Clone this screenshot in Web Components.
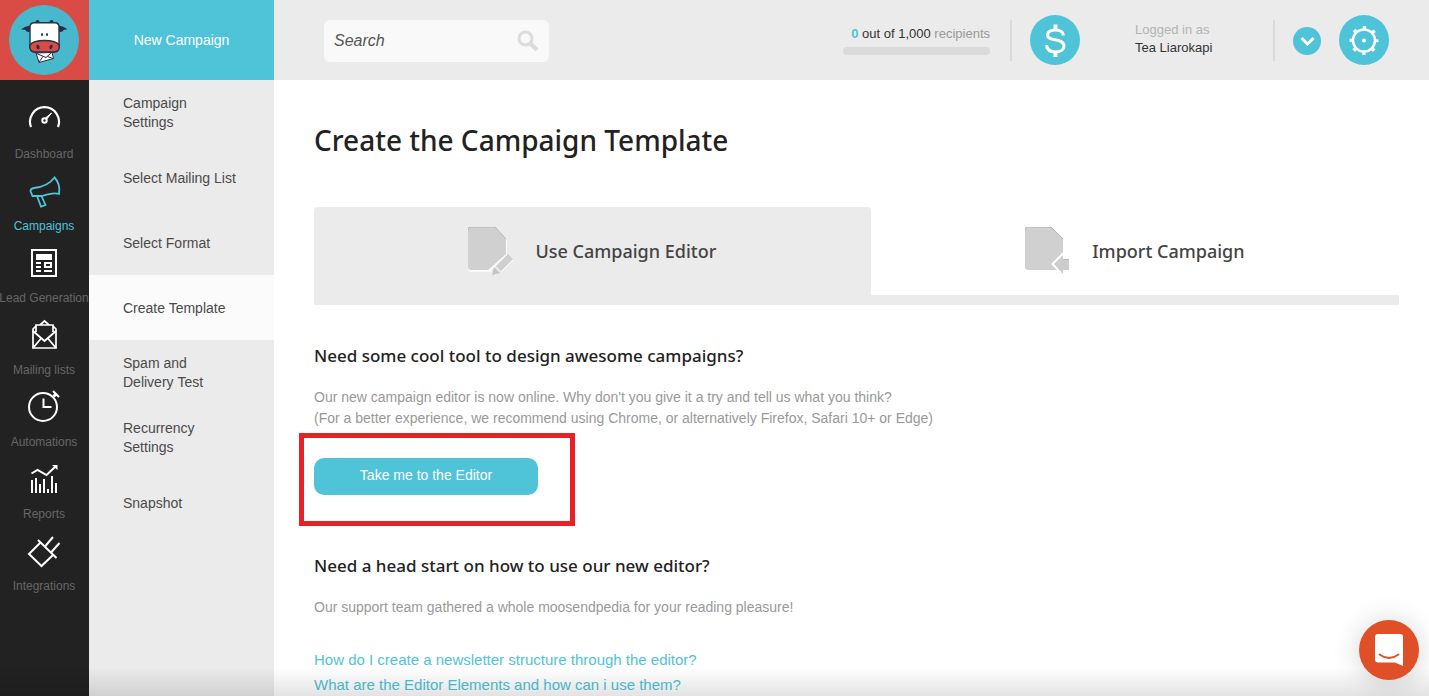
<!DOCTYPE html>
<html lang="en">
<head>
<meta charset="utf-8">
<meta name="viewport" content="width=device-width, initial-scale=1">
<title>Create the Campaign Template</title>
<style>
  :root {
    --blue: #4fc3d8;
    --red: #d94c45;
    --dark: #222;
    --grey: #ebebeb;
    --ink: #4a4a4a;
    --muted: #999;
    --head: "Noto Sans", "Open Sans", sans-serif;
  }
  body { margin: 0; background: #fff; color: var(--ink); font: 14px/20px "Liberation Sans", Arial, sans-serif; }
</style>
</head>
<body>
<app-shell>
  <brand-logo slot="logo"></brand-logo>
  <side-rail slot="rail">
    <rail-item icon="dashboard">Dashboard</rail-item>
    <rail-item icon="campaigns" active>Campaigns</rail-item>
    <rail-item icon="lead">Lead Generation</rail-item>
    <rail-item icon="mail">Mailing lists</rail-item>
    <rail-item icon="automations">Automations</rail-item>
    <rail-item icon="reports">Reports</rail-item>
    <rail-item icon="integrations">Integrations</rail-item>
  </side-rail>
  <step-list slot="steps" heading="New Campaign">
    <step-item>Campaign Settings</step-item>
    <step-item>Select Mailing List</step-item>
    <step-item>Select Format</step-item>
    <step-item active>Create Template</step-item>
    <step-item>Spam and Delivery&nbsp;Test</step-item>
    <step-item>Recurrency Settings</step-item>
    <step-item>Snapshot</step-item>
  </step-list>
  <top-bar slot="top" used="0" total="1,000" user="Tea Liarokapi"></top-bar>
  <page-title>Create the Campaign Template</page-title>
  <tab-bar>
    <tab-item icon="edit" active>Use Campaign Editor</tab-item>
    <tab-item icon="import">Import Campaign</tab-item>
  </tab-bar>
  <text-section>
    <span slot="title">Need some cool tool to design awesome campaigns?</span>
    Our new campaign editor is now online. Why don't you give it a try and tell us what you think?<br>
    (For a better experience, we recommend using Chrome, or alternatively Firefox, Safari 10+ or Edge)
  </text-section>
  <highlight-box><action-button>Take me to the Editor</action-button></highlight-box>
  <text-section>
    <span slot="title">Need a head start on how to use our new editor?</span>
    Our support team gathered a whole moosendpedia for your reading pleasure!
  </text-section>
  <help-links>
    <help-link>How do I create a newsletter structure through the editor?</help-link>
    <help-link>What are the Editor Elements and how can i use them?</help-link>
  </help-links>
  <chat-launcher slot="chat"></chat-launcher>
</app-shell>

<script>
const RESET = `*,*::before,*::after{box-sizing:border-box} a{color:inherit;text-decoration:none} button,input{font:inherit;color:inherit} svg{display:block}`;

const ICONS = {
  dashboard: `<path d="M5 27A14.5 14.5 0 1 1 32 27" stroke-width="2.2"/><circle cx="18.5" cy="20.5" r="2.2"/><path d="M19.5 18l6-5-5 6.500z" fill="currentColor" stroke-width="1"/>`,
  campaigns: `<path d="M28.500 5.500C33 10 34 16 33 22C28 20 22 22 16 24H6.500L4.500 19Q4.500 16.500 8 16Q22 14.500 28.500 5.500zM11 24L15 34.500L19.500 33L17.500 28.500L15.500 24" stroke-width="1.8"/>`,
  lead: `<path d="M6 6h24v26H6z"/><path d="M10 10h16v6H10zM10 18h5v2h-5zM10 22h5v2h-5zM10 26h5v2h-5zM18 26h8v2h-8z" fill="currentColor" stroke="none"/><path d="M19 19h6v4h-6z"/>`,
  mail: `<path d="M10 16V9h17v7M10 9h4l4.500-4L23 9h4M10 10L7 13v19h23V13l-3-3" stroke-width="1.700"/><path d="M7 15l11.500 10L30 15M7 32l8-9.500M30 32l-8-9.500" stroke-width="1.800"/>`,
  automations: `<circle cx="17" cy="19" r="14"/><path d="M17.500 10.500V19H25.500M27 3l6 6"/><path d="M27.500 8.500l2.500-2.500" stroke-width="3"/>`,
  reports: `<path d="M5.500 13.500L11.500 10L20.500 15L29 7"/><path d="M26 5h5.500v5z" fill="currentColor" stroke="none"/><path d="M6 33V20M10 33V18M14 33V24M18 33V19M22 33V29M26 33V16M30 33V23"/>`,
  integrations: `<path d="M14.500 10.500L3 22L15.500 34L27.500 22.500M12 8L30.500 26M19 14.500L27 5M25 20.500L33.500 11"/>`,
};

const DOCS = {
  edit: `<path d="M3 1h25l11 12v16L22 45H3q-3 0-3-3V4q0-3 3-3z" fill="#fafafa"/><path d="M3 0h24l11 12v15L20 43H3q-3 0-3-3V3q0-3 3-3z" fill="#d0d0d0"/><path d="M0 3q0-3 3-3h24l11 12" fill="none" stroke="#b4b4b4"/><path d="M40 27l5 5-12 12-5-5z" fill="#cfcfcf"/><path d="M45 33L33 45" stroke="#fff" fill="none"/><path d="M26 40l6 6-8 2z" fill="#c4c4c4"/>`,
  import: `<path d="M3 0h23l12 12v13L26 37l6 6H3q-3 0-3-3V3q0-3 3-3z" fill="#d0d0d0"/><path d="M0 3q0-3 3-3h23l12 12" fill="none" stroke="#b4b4b4"/><path d="M29 37l9-9v4h6v11h-6v4z" fill="#cdcdcd"/><path d="M38 32.500h6" stroke="#b8b8b8"/>`,
};

class BaseElement extends HTMLElement {
  constructor() { super(); this.attachShadow({ mode: "open" }); }
  connectedCallback() { this.shadowRoot.innerHTML = `<style>${RESET}${this.css()}</style>${this.html()}`; }
  css() { return ""; }
  html() { return "<slot></slot>"; }
}

class AppShell extends BaseElement {
  css() { return `
    :host{display:grid;grid-template-columns:89px 185px minmax(0,1fr);grid-template-rows:80px auto;min-height:100vh}
    .logo{grid-area:1/1}
    .rail{grid-area:2/1;background:var(--dark)}
    .steps{grid-area:1/2/3/3;background:var(--grey)}
    header{grid-area:1/3;background:var(--grey)}
    main{grid-area:2/3;padding:40px 30px 0 40px}
    .shade{position:fixed;left:0;right:0;bottom:0;height:28px;background:linear-gradient(transparent,rgba(0,0,0,.11));pointer-events:none}`; }
  html() { return `
    <div class="logo"><slot name="logo"></slot></div>
    <div class="rail"><slot name="rail"></slot></div>
    <div class="steps"><slot name="steps"></slot></div>
    <header><slot name="top"></slot></header>
    <main><slot></slot></main>
    <div class="shade"></div>
    <slot name="chat"></slot>`; }
}

class BrandLogo extends BaseElement {
  css() { return `:host{display:block;height:80px;background:var(--red)} a{display:flex;padding:5px 0 0 9px}`; }
  html() { return `
    <a href="#" aria-label="Home"><svg width="70" height="70" viewBox="9 5 70 70">
      <circle cx="44" cy="40" r="35" fill="#48b9cc"/>
      <g fill="#26304a">
        <path d="M21 29.500Q25 26 31 25.500V31.500Q27 33 25 29.700zM67.500 29.500Q64 26 58 25.500V31.500Q62 33 64 29.700z"/>
        <circle cx="37.500" cy="22" r="2"/><circle cx="51.500" cy="22" r="2"/>
      </g>
      <path d="M34 22.700H55Q59 22.700 59 27V43Q60 52 54 52H35Q29 52 30 43V27Q30 22.700 34 22.700z" fill="#fff" stroke="#26304a" stroke-width="1.400"/>
      <path d="M30 45Q33 40.500 44.500 40.500T59.200 45Q60 52 54 52H35Q29 52 30 45z" fill="#d94c45" stroke="#26304a" stroke-width="1.400"/>
      <g fill="#26304a"><ellipse cx="38" cy="47" rx="1.600" ry="2.300" transform="rotate(-20 38 47)"/><ellipse cx="51" cy="47" rx="1.600" ry="2.300" transform="rotate(20 51 47)"/><ellipse cx="42" cy="34.500" rx="1" ry="1.500"/><ellipse cx="47" cy="34.500" rx="1" ry="1.500"/></g>
      <path d="M36 53L52 52.500L53.500 58.500L39 62.500z" fill="#fff" stroke="#26304a"/>
      <path d="M36.500 53.500L46 57.500L51.500 52.700M39 62L43 56.500M53 58.500L47.500 56.500" fill="none" stroke="#26304a"/>
    </svg></a>`; }
}

class SideRail extends BaseElement {
  css() { return `:host{display:block} nav{display:flex;flex-direction:column;padding:10px 1px 0 0}`; }
  html() { return `<nav aria-label="Main"><slot></slot></nav>`; }
}

class RailItem extends BaseElement {
  css() { return `
    :host{display:block;color:#666}
    :host([active]){color:var(--blue)}
    a{display:flex;flex-direction:column;align-items:center;gap:10px;height:72px;padding-top:10px;font-size:12px;line-height:16px;white-space:nowrap}
    svg{color:#fff;flex:none}
    :host([active]) svg{color:var(--blue)}`; }
  html() { return `<a href="#"><svg width="36" height="36" viewBox="0 0 36 36" fill="none" stroke="currentColor" stroke-width="2" aria-hidden="true">${ICONS[this.getAttribute("icon")]}</svg><span><slot></slot></span></a>`; }
}

class StepList extends BaseElement {
  css() { return `
    :host{display:block}
    .new{display:flex;align-items:center;justify-content:center;height:80px;background:var(--blue);color:#fff}
    nav{display:flex;flex-direction:column}`; }
  html() { return `<a class="new" href="#">${this.getAttribute("heading")}</a><nav aria-label="Steps"><slot></slot></nav>`; }
}

class StepItem extends BaseElement {
  css() { return `
    :host{display:block}
    :host([active]){background:#fbfbfb}
    a{display:flex;align-items:center;height:65px;padding:1px 36px 0 34px;line-height:19px}`; }
  html() { return `<a href="#"><span><slot></slot></span></a>`; }
}

class TopBar extends BaseElement {
  css() { return `
    :host{display:flex;align-items:center;height:80px;padding:0 40px 0 50px}
    form{display:flex;align-items:center;width:225px;height:42px;padding:0 10px;margin:2px auto 0 0;border-radius:6px;background:#f9f9f9}
    input{flex:1;min-width:0;padding:0;border:0;outline:0;background:none;font-size:16px;font-style:italic}
    input::placeholder{color:#555;opacity:1}
    button{display:flex;align-items:center;justify-content:center;flex:none;padding:0;border:0;background:none;cursor:pointer}
    .quota{width:147px;padding-bottom:2px;text-align:right;font-size:13px;color:#999;white-space:nowrap}
    .quota b{font-weight:400;color:#333}
    .quota i{font-style:normal;font-weight:700;color:var(--blue)}
    .bar{height:8px;margin-top:3px;border-radius:4px;background:#dadada}
    .rule{width:2px;height:41px;background:#dadada}
    .round{width:50px;height:50px;border-radius:50%;background:var(--blue);color:#fff}
    .small{width:28px;height:28px;margin:2px 18px 0}
    .quota + .rule{margin:0 18px 0 20px}
    .user{width:138px;margin-left:55px;padding-bottom:2px;font-size:13px;line-height:18px;color:#b3b3b3}
    .user b{display:block;font-weight:400;color:#333}`; }
  html() { return `
    <form role="search" onsubmit="return false">
      <input type="search" aria-label="Search" placeholder="Search">
      <button aria-label="Submit search"><svg width="22" height="22" viewBox="0 0 22 22" fill="none" stroke="#dcdcdc"><circle cx="8.500" cy="8.500" r="6.500" stroke-width="3"/><path d="M13 13l7 7" stroke-width="4"/></svg></button>
    </form>
    <div class="quota"><i>${this.getAttribute("used")}</i> <b>out of ${this.getAttribute("total")}</b> recipients<div class="bar"></div></div>
    <span class="rule"></span>
    <button class="round" aria-label="Billing"><svg width="50" height="50" viewBox="0 0 50 50" fill="none" stroke="#fff" stroke-width="3"><path d="M33.500 20.500C33 16.500 29.500 15 25.500 15C20.500 15 17.500 17 17.500 20C17.500 27 34 22.500 34 31C34 34.500 30.500 37 25.500 37C20.500 37 17 34.500 16.500 30"/><path d="M25.500 9.500V15M25.500 37V42" stroke-width="4"/></svg></button>
    <div class="user">Logged in as<b>${this.getAttribute("user")}</b></div>
    <span class="rule"></span>
    <button class="round small" aria-label="Account menu"><svg width="28" height="28" viewBox="0 0 28 28" fill="none" stroke="#fff" stroke-width="3"><path d="M8.500 11l6 6 6-6"/></svg></button>
    <button class="round" aria-label="Settings"><svg width="50" height="50" viewBox="0 0 50 50" fill="none" stroke="#fff"><circle cx="25" cy="25.500" r="11" stroke-width="2.500"/><circle cx="25" cy="25.500" r="13" stroke-width="3" stroke-dasharray="3.400 6.810" stroke-dashoffset="1.700"/><circle cx="25" cy="25.500" r="2" fill="#fff" stroke="none"/></svg></button>`; }
}

class PageTitle extends BaseElement {
  css() { return `:host{display:block} h1{margin:0 0 47px;font:500 28px/40px var(--head);color:#222}`; }
  html() { return `<h1><slot></slot></h1>`; }
}

class TabBar extends BaseElement {
  css() { return `:host{display:flex;margin-bottom:38px}`; }
}

class TabItem extends BaseElement {
  css() { return `
    :host{display:block;flex:1 1 auto}
    button{display:flex;align-items:center;justify-content:center;gap:22px;width:100%;height:98px;padding:0;border:0;border-bottom:10px solid var(--grey);background:none;font:500 18px/26px var(--head);color:#444;cursor:pointer}
    :host([active]) button{background:var(--grey);border-radius:4px 4px 0 0}`; }
  html() { return `<button><svg width="45" height="48" viewBox="0 0 45 48" aria-hidden="true">${DOCS[this.getAttribute("icon")]}</svg><span><slot></slot></span></button>`; }
}

class TextSection extends BaseElement {
  css() { return `:host{display:block} h2{margin:0 0 18px;font:500 17px/26px var(--head);color:#222} p{margin:0;line-height:21px;color:var(--muted)}`; }
  html() { return `<h2><slot name="title"></slot></h2><p><slot></slot></p>`; }
}

class HighlightBox extends BaseElement {
  css() { return `:host{display:block;box-sizing:border-box;width:fit-content;margin:4px 0 27px -15px;padding:20px 32px 26px 10px;border:5px solid #e82127}`; }
}

class ActionButton extends BaseElement {
  css() { return `:host{display:block} button{display:block;width:224px;height:37px;padding:0 0 3px;border:0;border-radius:10px;background:var(--blue);color:#fff;cursor:pointer}`; }
  html() { return `<button><slot></slot></button>`; }
}

class HelpLinks extends BaseElement {
  css() { return `:host{display:flex;flex-direction:column;align-items:flex-start;gap:5px;margin-top:32px}`; }
}

class HelpLink extends BaseElement {
  css() { return `:host{display:block;font-size:15px;color:var(--blue)}`; }
  html() { return `<a href="#"><slot></slot></a>`; }
}

class ChatLauncher extends BaseElement {
  css() { return `
    :host{position:fixed;right:10px;bottom:16px}
    button{display:block;width:60px;height:60px;padding:0;border:0;border-radius:50%;background:#df5029;box-shadow:0 2px 28px rgba(0,0,0,.18);cursor:pointer}`; }
  html() { return `<button aria-label="Open chat"><svg width="60" height="60" viewBox="0 0 60 60"><path d="M19 14H41Q44 14 44 17V46L36 42.500H19Q16 42.500 16 39.500V17Q16 14 19 14z" fill="#fff"/><path d="M20.500 34.500Q30 41.500 39.500 34.500" fill="none" stroke="#df5029" stroke-width="1.800" stroke-linecap="round"/></svg></button>`; }
}

[["app-shell", AppShell], ["brand-logo", BrandLogo], ["side-rail", SideRail], ["rail-item", RailItem],
 ["step-list", StepList], ["step-item", StepItem], ["top-bar", TopBar], ["page-title", PageTitle],
 ["tab-bar", TabBar], ["tab-item", TabItem], ["text-section", TextSection], ["highlight-box", HighlightBox],
 ["action-button", ActionButton], ["help-links", HelpLinks], ["help-link", HelpLink], ["chat-launcher", ChatLauncher]
].forEach(([name, cls]) => { if (!customElements.get(name)) customElements.define(name, cls); });
</script>
</body>
</html>
